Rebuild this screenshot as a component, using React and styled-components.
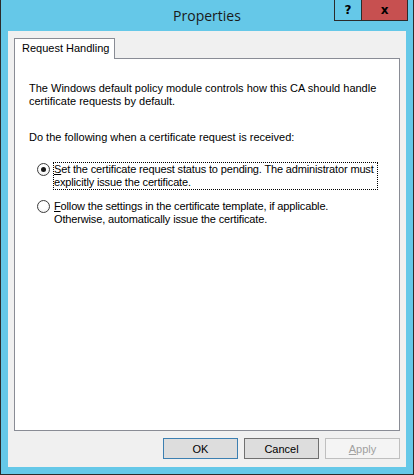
import React from "react";
import styled, { createGlobalStyle } from "styled-components";

const GlobalStyle = createGlobalStyle`
  html, body {
    margin: 0;
    padding: 0;
    background: #ffffff;
  }
  * {
    box-sizing: border-box;
  }
`;

const Window = styled.div`
  width: 414px;
  height: 475px;
  display: flex;
  flex-direction: column;
  background: #65c8e8;
  border: 1px solid #2b2b2b;
  border-top: none;
  font-family: "Liberation Sans", Arial, sans-serif;
  font-size: 11px;
  color: #000;
`;

const TitleBar = styled.div`
  height: 31px;
  flex: none;
  display: grid;
  grid-template-columns: 1fr auto 1fr;
  align-items: start;
`;

const Title = styled.div`
  grid-column: 2;
  font-family: "Open Sans", "Segoe UI", sans-serif;
  font-size: 14px;
  line-height: 31px;
  color: #1a1a1a;
`;

const Controls = styled.div`
  grid-column: 3;
  justify-self: end;
  display: flex;
  margin-right: 5px;
`;

const CaptionButton = styled.div`
  width: ${({ $wide }) => ($wide ? "46px" : "28px")};
  height: 21px;
  display: flex;
  align-items: center;
  justify-content: center;
  background: ${({ $close }) => ($close ? "#c75050" : "#65c8e8")};
  border: 1px solid #2b2b2b;
  border-top: none;
  border-left: ${({ $close }) => ($close ? "none" : "1px solid #2b2b2b")};
  font-family: "DejaVu Sans", sans-serif;
  font-weight: bold;
  font-size: 12px;
  color: #000;
`;

const Client = styled.div`
  flex: 1;
  margin: 0 7px 7px 7px;
  background: #f0f0f0;
  display: flex;
  flex-direction: column;
  padding: 7px 6px 8px 6px;
`;

const TabStrip = styled.div`
  display: flex;
  height: 20px;
  flex: none;
`;

const Tab = styled.div`
  width: 101px;
  height: 21px;
  padding-left: 7px;
  line-height: 19px;
  background: #fff;
  border: 1px solid #898c95;
  border-bottom: none;
  position: relative;
  z-index: 1;
  white-space: nowrap;
`;

const Panel = styled.div`
  flex: 1;
  background: #fff;
  border: 1px solid #898c95;
  padding: 23px 14px 0 14px;
  line-height: 13px;
`;

const Para = styled.p`
  margin: 0 0 ${({ $gap }) => $gap || 0}px 0;
  white-space: nowrap;
`;

const Options = styled.div`
  display: flex;
  flex-direction: column;
  gap: 10px;
  padding-left: 8px;
`;

const Option = styled.label`
  display: flex;
  align-items: flex-start;
  gap: 3px;
`;

const Radio = styled.span`
  flex: none;
  width: 13px;
  height: 13px;
  border-radius: 50%;
  border: 1px solid #3c3c3c;
  background: radial-gradient(circle at 50% 40%, #ffffff 40%, #e8e8e8 100%);
  display: flex;
  align-items: center;
  justify-content: center;
  &::after {
    content: "";
    width: 5px;
    height: 5px;
    border-radius: 50%;
    background: ${({ $checked }) => ($checked ? "#1a1a1a" : "transparent")};
  }
`;

const OptionText = styled.span`
  display: inline-block;
  white-space: nowrap;
  letter-spacing: -0.15px;
  padding: 0 3px 0 0;
  border: 1px dotted ${({ $focused }) => ($focused ? "#000" : "transparent")};
  margin-top: -1px;
`;

const Key = styled.u`
  text-decoration: underline;
`;

const ButtonRow = styled.div`
  display: flex;
  justify-content: flex-end;
  gap: 6px;
  margin-top: 7px;
`;

const Button = styled.button`
  width: 75px;
  height: 21px;
  padding: 0;
  font-family: "Liberation Sans", Arial, sans-serif;
  font-size: 11px;
  color: ${({ $disabled }) => ($disabled ? "#a0a0a0" : "#000")};
  background: ${({ $disabled }) => ($disabled ? "#f4f4f4" : "#dddddd")};
  border: 1px solid
    ${({ $default, $disabled }) =>
      $default ? "#3c7fb1" : $disabled ? "#bfbfbf" : "#707070"};
`;

export default function App() {
  return (
    <>
      <GlobalStyle />
      <Window>
        <TitleBar>
          <Title>Properties</Title>
          <Controls>
            <CaptionButton>?</CaptionButton>
            <CaptionButton $wide $close>
              x
            </CaptionButton>
          </Controls>
        </TitleBar>
        <Client>
          <TabStrip>
            <Tab>Request Handling</Tab>
          </TabStrip>
          <Panel>
            <Para $gap={23}>
              The Windows default policy module controls how this CA should handle
              <br />
              certificate requests by default.
            </Para>
            <Para $gap={19}>
              Do the following when a certificate request is received:
            </Para>
            <Options>
              <Option>
                <Radio $checked />
                <OptionText $focused>
                  <Key>S</Key>et the certificate request status to pending. The
                  administrator must
                  <br />
                  explicitly issue the certificate.
                </OptionText>
              </Option>
              <Option>
                <Radio />
                <OptionText>
                  <Key>F</Key>ollow the settings in the certificate template, if
                  applicable.
                  <br />
                  Otherwise, automatically issue the certificate.
                </OptionText>
              </Option>
            </Options>
          </Panel>
          <ButtonRow>
            <Button $default>OK</Button>
            <Button>Cancel</Button>
            <Button $disabled>
              <Key>A</Key>pply
            </Button>
          </ButtonRow>
        </Client>
      </Window>
    </>
  );
}
